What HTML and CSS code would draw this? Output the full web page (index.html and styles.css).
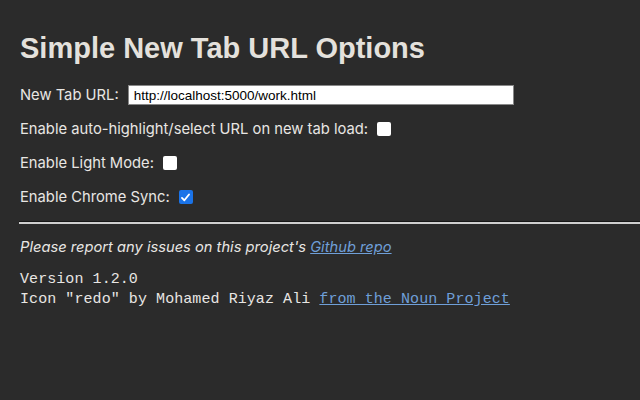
FILE: index.html
```html
<!DOCTYPE html>
<html>
<head>
<meta charset="utf-8">
<link rel="stylesheet" href="styles.css">
</head>
<body>
<div class="page">
  <h1 class="title">Simple New Tab URL Options</h1>
  <div class="row">
    <label class="label">New Tab URL:</label>
    <input class="url" type="text" value="http://localhost:5000/work.html">
  </div>
  <div class="row">
    <label class="label">Enable auto-highlight/select URL on new tab load:</label>
    <span class="box"></span>
  </div>
  <div class="row">
    <label class="label">Enable Light Mode:</label>
    <span class="box"></span>
  </div>
  <div class="row">
    <label class="label">Enable Chrome Sync:</label>
    <span class="box checked"><svg viewBox="0 0 14 14" width="14" height="14"><path d="M3.2 7.4 L5.8 10 L10.8 3.8" fill="none" stroke="#fff" stroke-width="2" stroke-linecap="round" stroke-linejoin="round"/></svg></span>
  </div>
  <hr class="rule">
  <p class="note">Please report any issues on this project's <a class="link" href="#">Github repo</a></p>
  <pre class="mono">Version 1.2.0
Icon "redo" by Mohamed Riyaz Ali <a class="link" href="#">from the Noun Project</a></pre>
</div>
</body>
</html>
```
FILE: styles.css
```css
html, body {
  margin: 0;
  padding: 0;
  background: #2b2b2b;
  color: #e8e6e3;
  font-family: "Liberation Sans", Arial, sans-serif;
}
.page {
  padding: 32px 0 0 20px;
}
.title {
  margin: 0 0 21px 0;
  font-size: 29px;
  font-weight: bold;
  color: #e4e1dc;
  line-height: 32px;
}
.row {
  display: flex;
  align-items: center;
  height: 20px;
  margin-bottom: 14px;
  font-family: Inter, "Liberation Sans", sans-serif;
  font-size: 14.75px;
}
.label {
  margin-right: 9px;
}
.url {
  width: 386px;
  height: 20px;
  box-sizing: border-box;
  border: 1px solid #888;
  padding: 0 5px;
  font-family: "Liberation Sans", Arial, sans-serif;
  font-size: 13.5px;
  color: #000;
  background: #fff;
  outline: none;
}
.box {
  width: 14px;
  height: 14px;
  box-sizing: border-box;
  background: #fff;
  border-radius: 2px;
  display: flex;
  align-items: center;
  justify-content: center;
}
.box.checked {
  background: #1a73e8;
}
.box.checked svg {
  width: 13px;
  height: 13px;
}
.rule {
  margin: 0 0 0 -1px;
  border: none;
  border-top: 1px solid #161616;
  border-bottom: 2px solid #cfcfcf;
  height: 0;
}
.note {
  margin: 14px 0 0 0;
  font-family: Inter, "Liberation Sans", sans-serif;
  font-style: italic;
  font-size: 14.7px;
}
.link {
  color: #6f9fd8;
  text-decoration: underline;
}
.mono {
  margin: 14px 0 0 0;
  font-family: "Liberation Mono", "DejaVu Sans Mono", monospace;
  font-size: 15px;
  line-height: 20px;
  letter-spacing: 0.07px;
}
```
